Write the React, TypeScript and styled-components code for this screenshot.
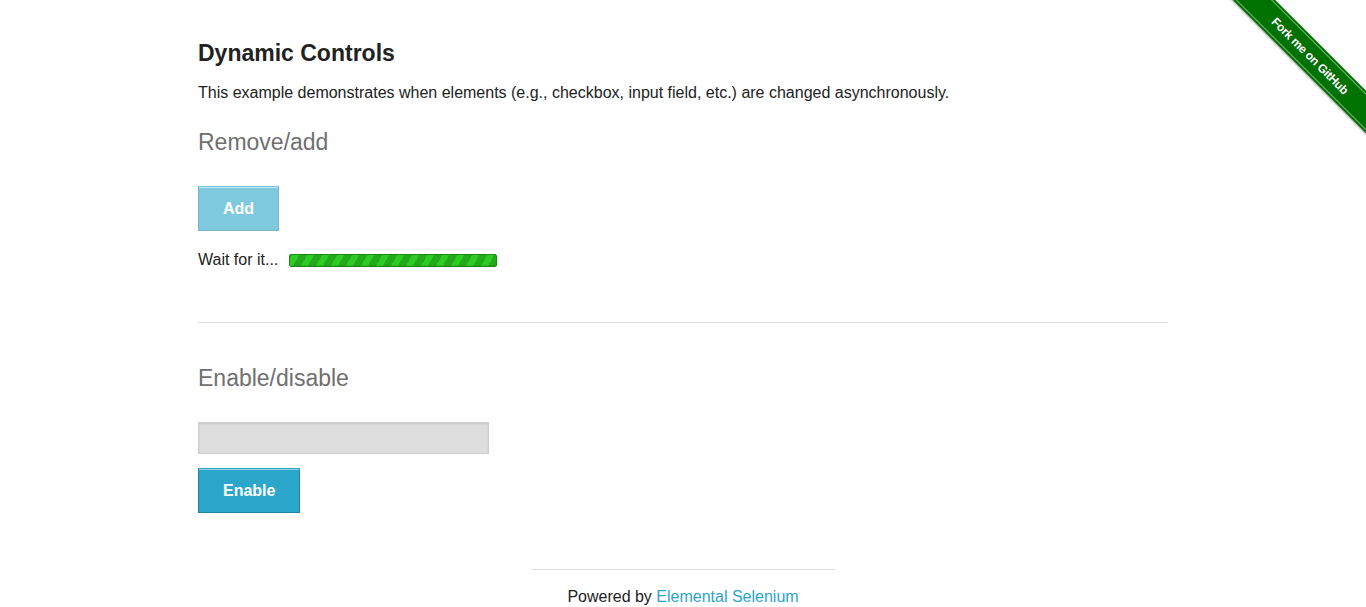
import React from "react";
import styled, { createGlobalStyle } from "styled-components";

const GlobalStyle = createGlobalStyle`
  html, body { margin: 0; padding: 0; background: #ffffff; }
  body {
    font-family: "Liberation Sans", Arial, sans-serif;
    color: #222222;
    font-size: 16px;
  }
  * { box-sizing: border-box; }
`;

const Page = styled.div`
  position: relative;
  width: 100%;
  min-height: 607px;
  overflow: hidden;
`;

const Content = styled.main`
  width: 970px;
  margin: 0 auto;
  padding-top: 39px;
`;

const Title = styled.h3`
  margin: 0;
  font-size: 23px;
  line-height: 28px;
  font-weight: bold;
  color: #222222;
`;

const Intro = styled.p`
  margin: 14px 0 0;
  font-size: 16px;
  line-height: 24px;
`;

const SubHeading = styled.h4<{ $top: number }>`
  margin: ${(p) => p.$top}px 0 0;
  font-size: 23px;
  line-height: 28px;
  font-weight: normal;
  color: #6f6f6f;
`;

const Button = styled.button<{ $faded?: boolean; $top: number }>`
  display: block;
  margin: ${(p) => p.$top}px 0 0;
  padding: 13px 24px 13px;
  font-family: "Liberation Sans", Arial, sans-serif;
  font-size: 16px;
  line-height: 17px;
  font-weight: bold;
  color: #ffffff;
  background: #2ba6cb;
  border: 1px solid #2284a1;
  border-top-color: #2aa1c4;
  box-shadow: inset 0 1px 0 rgba(255, 255, 255, 0.5);
  opacity: ${(p) => (p.$faded ? 0.6 : 1)};
  border-radius: 0;
  cursor: pointer;
`;

const LoadingRow = styled.div`
  display: flex;
  align-items: center;
  margin-top: 17px;
  height: 24px;
`;

const LoadingText = styled.span`
  font-size: 16px;
  line-height: 24px;
`;

const ProgressBar = styled.div`
  margin-left: 11px;
  margin-top: 1px;
  width: 208px;
  height: 13px;
  border: 1px solid #1b8c13;
  border-radius: 2px;
  background: repeating-linear-gradient(
    -60deg,
    #23aa1b 0px,
    #23aa1b 7px,
    #2ecb25 7px,
    #2ecb25 13px
  );
  box-shadow: inset 0 -1px 0 rgba(0, 0, 0, 0.08);
`;

const Divider = styled.hr`
  margin: 50px 0 0;
  border: 0;
  border-top: 1px solid #dddddd;
  height: 0;
`;

const TextInput = styled.input`
  display: block;
  margin: 30px 0 0;
  width: 291px;
  height: 32px;
  background: #dddddd;
  border: 1px solid #cccccc;
  box-shadow: inset 0 1px 2px rgba(0, 0, 0, 0.1);
  padding: 0 8px;
  font-size: 14px;
`;

const Footer = styled.footer`
  width: 304px;
  margin: 56px auto 0;
  border-top: 1px solid #dddddd;
  padding-top: 15px;
  text-align: center;
  font-size: 16px;
  line-height: 24px;
  color: #222222;
`;

const Link = styled.a`
  color: #2ba6cb;
  text-decoration: none;
`;

const RibbonClip = styled.div`
  position: absolute;
  top: 0;
  right: 0;
  width: 150px;
  height: 150px;
  overflow: hidden;
  pointer-events: none;
`;

const Ribbon = styled.a`
  position: absolute;
  left: -31px;
  top: 41px;
  width: 250px;
  height: 30px;
  transform: rotate(45deg);
  background: #007200;
  box-shadow: 0 1px 2px rgba(0, 0, 0, 0.35);
  display: flex;
  align-items: center;
  justify-content: center;
  color: #ffffff;
  font-family: "Liberation Sans", Arial, sans-serif;
  font-weight: bold;
  font-size: 12px;
  letter-spacing: -0.3px;
  text-decoration: none;
  text-shadow: 0 0 1px rgba(0, 0, 0, 0.4);
  &::before,
  &::after {
    content: "";
    position: absolute;
    left: 0;
    right: 0;
    height: 1px;
    background: rgba(255, 255, 255, 0.45);
  }
  &::before { top: 2px; }
  &::after { bottom: 2px; }
`;

export default function App() {
  return (
    <Page>
      <GlobalStyle />
      <Content>
        <Title>Dynamic Controls</Title>
        <Intro>
          This example demonstrates when elements (e.g., checkbox, input field, etc.) are changed
          asynchronously.
        </Intro>
        <SubHeading $top={23}>Remove/add</SubHeading>
        <Button $faded $top={30} type="button" disabled>
          Add
        </Button>
        <LoadingRow>
          <LoadingText>Wait for it...</LoadingText>
          <ProgressBar />
        </LoadingRow>
        <Divider />
        <SubHeading $top={41}>Enable/disable</SubHeading>
        <TextInput type="text" disabled />
        <Button $top={14} type="button">
          Enable
        </Button>
      </Content>
      <Footer>
        Powered by <Link href="#">Elemental Selenium</Link>
      </Footer>
      <RibbonClip>
        <Ribbon href="#">Fork me on GitHub</Ribbon>
      </RibbonClip>
    </Page>
  );
}
